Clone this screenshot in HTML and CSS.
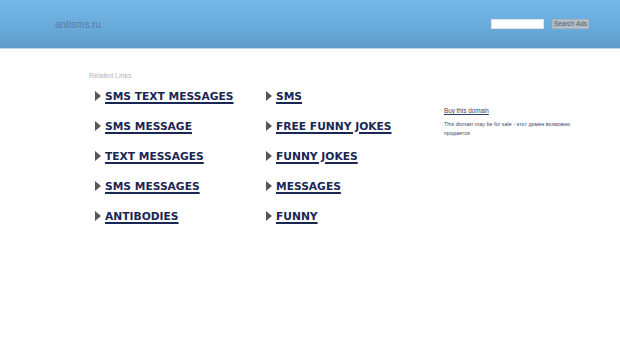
FILE: index.html
```html
<!DOCTYPE html>
<html>
<head>
<meta charset="utf-8">
<link rel="stylesheet" href="styles.css">
</head>
<body>
<header class="top">
  <div class="domain">antisms.ru</div>
  <form class="search">
    <input class="search-input" type="text">
    <button class="search-btn" type="button">Search Ads</button>
  </form>
</header>
<main class="main">
  <section class="links">
    <div class="related">Related Links</div>
    <div class="grid">
      <a class="link" href="#"><span class="arrow"></span><span class="txt">SMS TEXT MESSAGES</span></a>
      <a class="link" href="#"><span class="arrow"></span><span class="txt">SMS</span></a>
      <a class="link" href="#"><span class="arrow"></span><span class="txt">SMS MESSAGE</span></a>
      <a class="link" href="#"><span class="arrow"></span><span class="txt">FREE FUNNY JOKES</span></a>
      <a class="link" href="#"><span class="arrow"></span><span class="txt">TEXT MESSAGES</span></a>
      <a class="link" href="#"><span class="arrow"></span><span class="txt">FUNNY JOKES</span></a>
      <a class="link" href="#"><span class="arrow"></span><span class="txt">SMS MESSAGES</span></a>
      <a class="link" href="#"><span class="arrow"></span><span class="txt">MESSAGES</span></a>
      <a class="link" href="#"><span class="arrow"></span><span class="txt">ANTIBODIES</span></a>
      <a class="link" href="#"><span class="arrow"></span><span class="txt">FUNNY</span></a>
    </div>
  </section>
  <aside class="side">
    <a class="buy" href="#">Buy this domain</a>
    <p class="note">This domain may be for sale - этот домен возможно продается</p>
  </aside>
</main>
</body>
</html>
```

FILE: styles.css
```css
html, body {
  margin: 0;
  padding: 0;
  background: #ffffff;
  font-family: "DejaVu Sans", Verdana, sans-serif;
}
.top {
  height: 49px;
  background: linear-gradient(to bottom, #74b9e8 0%, #6aaddc 50%, #5f9bc9 100%);
  border-bottom: 1px solid #b9d6ec;
  display: flex;
  align-items: center;
  padding: 0 31px 0 55px;
  box-sizing: border-box;
}
.domain {
  font-family: "Liberation Sans", Arial, sans-serif;
  font-size: 10px;
  color: #5b7aa4;
  flex: 1;
}
.search {
  display: flex;
  align-items: center;
  gap: 8px;
  margin: 0;
}
.search-input {
  width: 51px;
  height: 8px;
  border: 1px solid #d9e6f2;
  background: #fff;
  padding: 0;
  margin: 0;
  box-sizing: content-box;
}
.search-btn {
  height: 10px;
  width: 37px;
  padding: 0;
  border: 1px solid #a9b6c2;
  background: #b5bec8;
  color: #4b5a6a;
  font-family: "Liberation Sans", Arial, sans-serif;
  font-size: 6.5px;
  line-height: 8px;
}
.main {
  display: flex;
  padding: 22px 0 0 89px;
}
.links {
  width: 355px;
}
.related {
  font-family: "Liberation Sans", Arial, sans-serif;
  font-size: 7px;
  color: #b5b5b5;
  height: 9px;
  line-height: 9px;
}
.grid {
  display: grid;
  grid-template-columns: 171px 170px;
  row-gap: 12px;
  padding: 7px 0 0 6px;
}
.link {
  display: flex;
  align-items: center;
  height: 18px;
  color: #1a2654;
  text-decoration: none;
}
.arrow {
  width: 0;
  height: 0;
  border-top: 5px solid transparent;
  border-bottom: 5px solid transparent;
  border-left: 6px solid #565656;
  margin-right: 4px;
  margin-top: -1px;
}
.txt {
  font-size: 10.7px;
  font-weight: bold;
  text-decoration: underline;
  text-decoration-thickness: 2px;
  text-underline-offset: 2px;
}
.side {
  padding-top: 34px;
  width: 140px;
}
.buy {
  font-family: "Liberation Sans", Arial, sans-serif;
  font-size: 6.3px;
  color: #2d3f6a;
  text-decoration: underline;
  display: block;
  line-height: 9px;
  margin-top: 1px;
}
.note {
  font-family: "Liberation Sans", Arial, sans-serif;
  font-size: 5.4px;
  color: #3c4a6a;
  margin: 5px 0 0 0;
  line-height: 9px;
  width: 130px;
}
```
